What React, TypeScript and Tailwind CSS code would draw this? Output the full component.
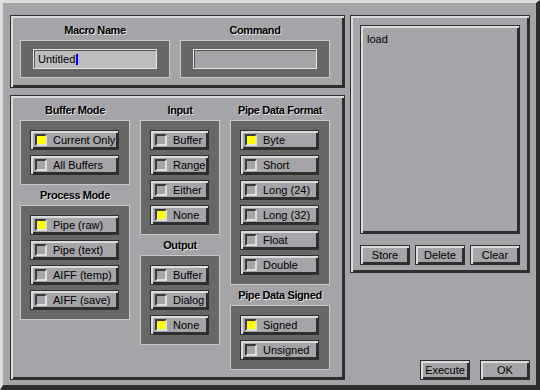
const RAISED =
  "border border-[#2e2e2e] shadow-[inset_2px_2px_0_#dcdcdc,inset_-2px_-2px_0_#2e2e2e]";
const LABEL =
  "flex h-[20px] items-center justify-center text-[11px] font-bold tracking-[-0.4px] text-black [text-shadow:1px_1px_0_#e4e4e4]";

function Toggle({ label, on = false }: { label: string; on?: boolean }) {
  return (
    <div className={`flex h-[20px] items-center gap-[6px] bg-[#a5a4a8] pl-[4px] text-[11px] text-black ${RAISED}`}>
      <span
        className={`h-[12px] w-[12px] shrink-0 border-2 border-t-[#3a3a3a] border-l-[#3a3a3a] border-b-[#dedede] border-r-[#dedede] ${
          on ? "bg-[#ffff00]" : "bg-[#a5a4a8]"
        }`}
      />
      <span className="leading-none">{label}</span>
    </div>
  );
}

function Group({ title, items, width }: { title: string; items: [string, boolean][]; width: string }) {
  return (
    <div className={`flex flex-col ${width}`}>
      <div className={LABEL}>{title}</div>
      <div className="flex flex-col gap-[5px] border border-[#c8c8c8] bg-[#666866] py-[9px] pl-[9px] pr-[10px]">
        {items.map(([l, on]) => (
          <Toggle key={l} label={l} on={on} />
        ))}
      </div>
    </div>
  );
}

function Btn({ label }: { label: string }) {
  return (
    <div className={`flex h-[20px] w-[50px] items-center justify-center bg-[#a5a4a8] text-[11px] text-black ${RAISED}`}>
      {label}
    </div>
  );
}

export default function App() {
  return (
    <div
      className="flex h-[390px] w-[540px] gap-[5px] border-t-[3px] border-l-[3px] border-b-[5px] border-r-[4px] border-t-[#dcdcdc] border-l-[#dcdcdc] border-b-[#2e2e2e] border-r-[#2e2e2e] bg-[#a5a4a8] pb-[5px] pl-[7px] pt-[12px]"
      style={{ fontFamily: '"Liberation Sans", Arial, sans-serif' }}
    >
      {/* left column */}
      <div className="flex w-[335px] flex-col gap-[7px]">
        {/* macro name / command */}
        <div className={`flex h-[73px] gap-[10px] pl-[9px] pt-[4px] ${RAISED}`}>
          <div className="flex w-[150px] flex-col">
            <div className={LABEL}>Macro Name</div>
            <div className="flex h-[38px] items-center justify-center border border-[#c8c8c8] bg-[#666866]">
              <div className="flex h-[20px] w-[124px] items-center border border-[#e4e4e4] bg-[#bdbdbd] pl-[4px] text-[11px] text-black shadow-[inset_1px_1px_0_#555]">
                Untitled
                <span className="ml-[1px] h-[11px] w-[2px] bg-[#0000ff]" />
              </div>
            </div>
          </div>
          <div className="flex w-[150px] flex-col">
            <div className={LABEL}>Command</div>
            <div className="flex h-[38px] items-center justify-center border border-[#c8c8c8] bg-[#666866]">
              <div className="h-[20px] w-[124px] border border-[#e4e4e4] bg-[#a5a4a8] shadow-[inset_1px_1px_0_#555]" />
            </div>
          </div>
        </div>

        {/* modes */}
        <div className={`flex h-[285px] items-start gap-[10px] pl-[9px] pt-[4px] ${RAISED}`}>
          <div className="flex flex-col">
            <Group
              title="Buffer Mode"
              width="w-[110px]"
              items={[
                ["Current Only", true],
                ["All Buffers", false],
              ]}
            />
            <Group
              title="Process Mode"
              width="w-[110px]"
              items={[
                ["Pipe (raw)", true],
                ["Pipe (text)", false],
                ["AIFF (temp)", false],
                ["AIFF (save)", false],
              ]}
            />
          </div>
          <div className="flex flex-col">
            <Group
              title="Input"
              width="w-[80px]"
              items={[
                ["Buffer", false],
                ["Range", false],
                ["Either", false],
                ["None", true],
              ]}
            />
            <Group
              title="Output"
              width="w-[80px]"
              items={[
                ["Buffer", false],
                ["Dialog", false],
                ["None", true],
              ]}
            />
          </div>
          <div className="flex flex-col">
            <Group
              title="Pipe Data Format"
              width="w-[100px]"
              items={[
                ["Byte", true],
                ["Short", false],
                ["Long (24)", false],
                ["Long (32)", false],
                ["Float", false],
                ["Double", false],
              ]}
            />
            <Group
              title="Pipe Data Signed"
              width="w-[100px]"
              items={[
                ["Signed", true],
                ["Unsigned", false],
              ]}
            />
          </div>
        </div>
      </div>

      {/* right column */}
      <div className="flex w-[180px] flex-col">
        <div className={`flex h-[258px] flex-col gap-[11px] px-[9px] pt-[9px] ${RAISED}`}>
          <div className={`h-[209px] w-[160px] bg-[#a5a4a8] px-[6px] pt-[5px] text-[11px] text-black ${RAISED}`}>
            load
          </div>
          <div className="flex gap-[5px]">
            <Btn label="Store" />
            <Btn label="Delete" />
            <Btn label="Clear" />
          </div>
        </div>
        <div className="mt-auto flex justify-end gap-[10px]">
          <Btn label="Execute" />
          <Btn label="OK" />
        </div>
      </div>
    </div>
  );
}
